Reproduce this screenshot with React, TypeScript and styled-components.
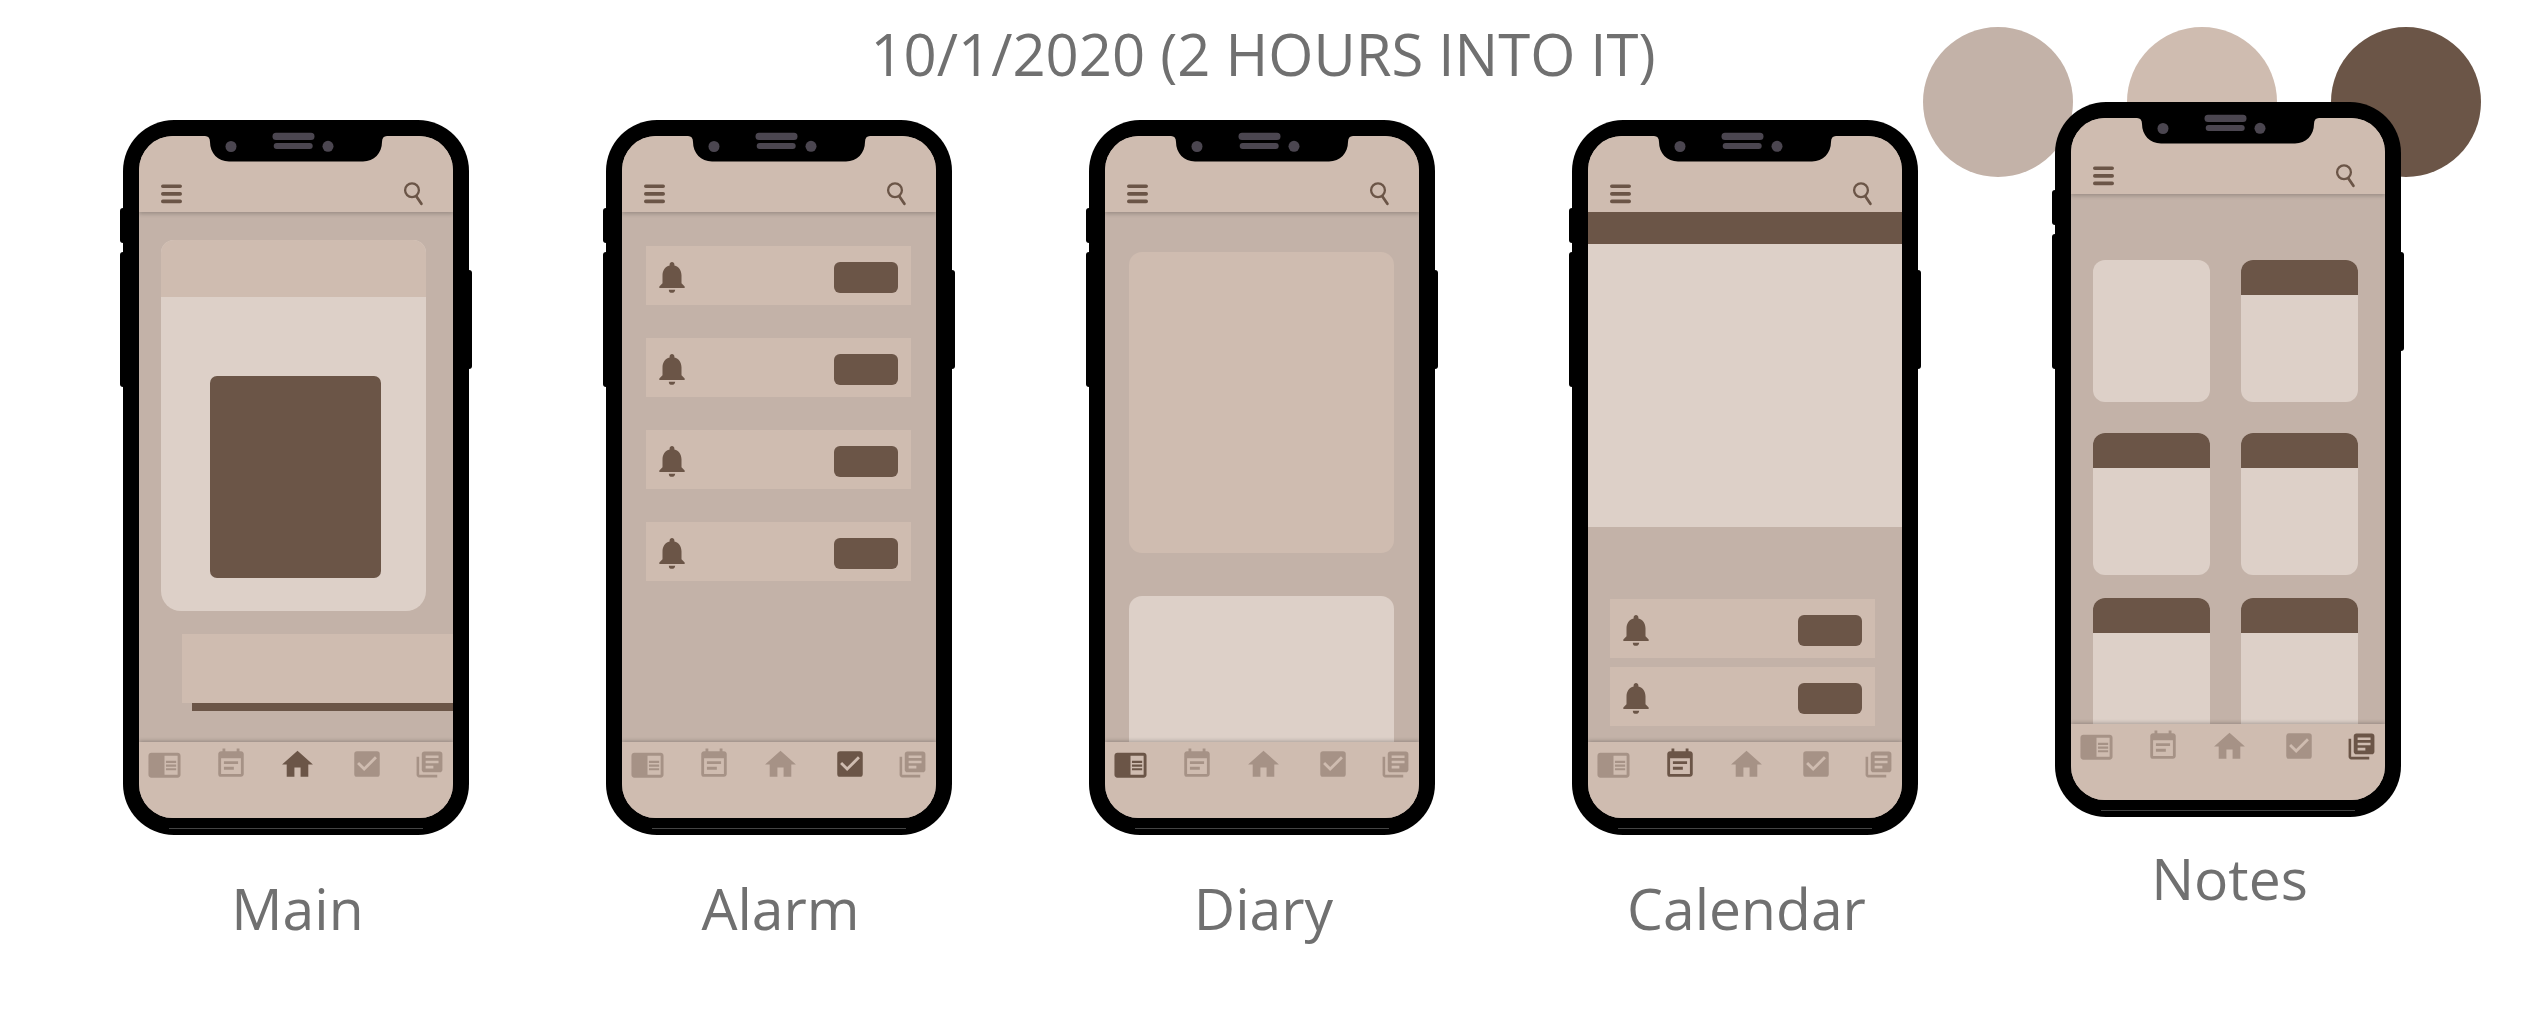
import React from "react";
import styled, { createGlobalStyle } from "styled-components";
import {
  MdCheckBox,
  MdChromeReaderMode,
  MdEventNote,
  MdHome,
  MdLibraryBooks,
  MdNotifications,
} from "react-icons/md";

const color = {
  taupe: "#c3b2a8",
  sand: "#cfbcb0",
  cream: "#ddd0c8",
  brown: "#6b5547",
  muted: "#a69286",
  text: "#707070",
};

const GlobalStyle = createGlobalStyle`
  *, *::before, *::after { box-sizing: border-box; }
  body {
    margin: 0;
    background: #fff;
    color: ${color.text};
    font-family: "Segoe UI", "Open Sans", "Noto Sans", sans-serif;
  }
  button { border: 0; padding: 0; background: none; color: inherit; cursor: pointer; }
`;

const Page = styled.main`
  position: relative;
  padding-bottom: 64px;
`;

const Title = styled.h1`
  position: relative;
  z-index: 1;
  margin: 0;
  height: 120px;
  padding-top: 14px;
  font-size: 58px;
  line-height: 80px;
  font-weight: 400;
  text-align: center;
  white-space: nowrap;
`;

const Palette = styled.div`
  position: absolute;
  top: 27px;
  right: 45px;
  display: flex;
  gap: 54px;
`;

const Swatch = styled.div<{ $fill: string }>`
  width: 150px;
  height: 150px;
  border-radius: 50%;
  background: ${(p) => p.$fill};
`;

const Board = styled.div`
  position: relative;
  display: flex;
  justify-content: space-between;
  align-items: flex-start;
  padding: 0 125px 0 123px;
`;

const Figure = styled.figure<{ $raised?: boolean }>`
  display: flex;
  flex-direction: column;
  align-items: center;
  gap: ${(p) => (p.$raised ? "21px" : "33px")};
  margin: ${(p) => (p.$raised ? "-18px 0 0" : "0")};
`;

const Caption = styled.figcaption`
  padding-left: 3px;
  font-size: 57px;
  line-height: 80px;
`;

const Device = styled.div`
  position: relative;
  width: 346px;
  height: 715px;
  padding: 16px 16px 17px;
  border-radius: 51px;
  background: #000;

  &::after {
    content: "";
    position: absolute;
    right: 46px;
    bottom: 6px;
    left: 46px;
    height: 1px;
    background: #444;
  }
`;

const SideKey = styled.span<{ $side: "left" | "right"; $top: number; $length: number }>`
  position: absolute;
  ${(p) => p.$side}: -3px;
  top: ${(p) => p.$top}px;
  width: 8px;
  height: ${(p) => p.$length}px;
  border-radius: 3px;
  background: #000;
`;

const Notch = styled.svg`
  position: absolute;
  top: 12px;
  left: 82px;
  width: 182px;
  height: 30px;
`;

const Screen = styled.div`
  display: flex;
  flex-direction: column;
  height: 100%;
  overflow: hidden;
  border-radius: 34px;
  background: ${color.taupe};
`;

const TopBar = styled.header`
  flex: none;
  display: flex;
  justify-content: space-between;
  align-items: flex-end;
  height: 76px;
  padding: 0 29px 6px 22px;
  background: ${color.sand};
  color: ${color.brown};
  box-shadow: 0 2px 4px rgba(0, 0, 0, 0.2);

  svg { display: block; }
`;

const Content = styled.div<{ $inset?: string }>`
  flex: 1;
  min-height: 0;
  overflow: hidden;
  display: flex;
  flex-direction: column;
  padding: ${(p) => p.$inset ?? "0"};
`;

const TabBar = styled.nav`
  flex: none;
  display: flex;
  justify-content: space-between;
  align-items: flex-start;
  height: 76px;
  padding: 3px 8px 0;
  background: ${color.sand};
  box-shadow: 0 -1px 4px rgba(0, 0, 0, 0.24);
`;

const Tab = styled.button<{ $active: boolean; $pad: string }>`
  display: flex;
  align-items: center;
  height: 38px;
  padding: ${(p) => p.$pad};
  color: ${(p) => (p.$active ? color.brown : color.muted)};
`;

const Hero = styled.section`
  flex: none;
  height: 371px;
  margin-right: 27px;
  overflow: hidden;
  border-radius: 13px 13px 20px 20px;
  background: ${color.cream};
`;

const HeroHeader = styled.div`
  height: 57px;
  background: ${color.sand};
`;

const HeroPicture = styled.div`
  width: 171px;
  height: 202px;
  margin: 79px 0 0 49px;
  border-radius: 7px;
  background: ${color.brown};
`;

const Strip = styled.section`
  flex: none;
  height: 69px;
  margin: 23px 0 0 21px;
  background: ${color.sand};
`;

const StripProgress = styled.div`
  flex: none;
  height: 8px;
  margin-left: 31px;
  background: ${color.brown};
`;

const AlarmList = styled.ul<{ $gap: number }>`
  display: flex;
  flex-direction: column;
  gap: ${(p) => p.$gap}px;
  margin: 0;
  padding: 0;
  list-style: none;
`;

const AlarmItem = styled.li`
  display: flex;
  justify-content: space-between;
  align-items: flex-start;
  height: 59px;
  padding: 16px 13px 0 7px;
  background: ${color.sand};
  color: ${color.brown};

  svg { margin-top: -4px; }
`;

const AlarmButton = styled.button`
  && {
    width: 64px;
    height: 31px;
    border-radius: 6px;
    background: ${color.brown};
  }
`;

const Entry = styled.section<{ $fill: string; $height: number }>`
  flex: none;
  height: ${(p) => p.$height}px;
  border-radius: 13px;
  background: ${(p) => p.$fill};

  & + & { margin-top: 43px; }
`;

const MonthHeader = styled.div`
  flex: none;
  height: 32px;
  background: ${color.brown};
`;

const MonthView = styled.div`
  flex: none;
  height: 283px;
  background: ${color.cream};
`;

const Reminders = styled.section`
  padding: 72px 27px 0 22px;
`;

const NoteRow = styled.div<{ $space: number }>`
  flex: none;
  display: grid;
  grid-template-columns: 1fr 1fr;
  gap: 31px;
  height: 142px;
  margin-top: ${(p) => p.$space}px;
`;

const Note = styled.article<{ $plain?: boolean }>`
  overflow: hidden;
  border-radius: 12px;
  background: ${color.cream};

  &::before {
    content: "";
    display: block;
    height: ${(p) => (p.$plain ? "0" : "35px")};
    background: ${color.brown};
  }
`;

const tabs = [
  { name: "Diary", Icon: MdChromeReaderMode, size: 35, pad: "0" },
  { name: "Calendar", Icon: MdEventNote, size: 34, pad: "0 0 0 2px" },
  { name: "Main", Icon: MdHome, size: 37, pad: "0 4px 0 0" },
  { name: "Alarm", Icon: MdCheckBox, size: 34, pad: "0" },
  { name: "Notes", Icon: MdLibraryBooks, size: 31, pad: "0" },
];

function Phone({ name, raised, children }: { name: string; raised?: boolean; children: React.ReactNode }) {
  return (
    <Figure $raised={raised}>
      <Device>
        <SideKey $side="left" $top={88} $length={35} />
        <SideKey $side="left" $top={132} $length={135} />
        <SideKey $side="right" $top={150} $length={99} />
        <Screen>
          <TopBar>
            <button aria-label="Menu">
              <svg width="21" height="25" viewBox="0 0 21 25" stroke="currentColor" strokeWidth="3.6" strokeLinecap="round">
                <path d="M1.8 5.3h17.4M1.8 12.9h17.4M1.8 20.4h17.4" />
              </svg>
            </button>
            <button aria-label="Search">
              <svg width="22" height="26" viewBox="0 0 22 26" fill="none" stroke="currentColor" strokeWidth="2.3" strokeLinecap="round">
                <circle cx="10" cy="10.2" r="6.9" />
                <path d="M14.600 16.800l4.800 7" strokeWidth="2.8" />
              </svg>
            </button>
          </TopBar>
          {children}
          <TabBar aria-label="Sections">
            {tabs.map(({ name: tab, Icon, size, pad }) => (
              <Tab key={tab} aria-label={tab} $active={tab === name} $pad={pad}>
                <Icon size={size} />
              </Tab>
            ))}
          </TabBar>
        </Screen>
        <Notch viewBox="0 0 182 30" aria-hidden="true">
          <path d="M0 0V4Q5 4 5 10C5 21 13 29.500 24 29.500H158C169 29.500 177 21 177 10Q177 4 182 4V0Z" fill="#000" />
          <g fill="#4b4650">
            <circle cx="26" cy="14.500" r="5.500" />
            <circle cx="123" cy="14.300" r="5.500" />
            <rect x="67.500" y="0.700" width="42" height="7.300" rx="3.500" />
            <rect x="68.700" y="11" width="39" height="6" rx="3" />
          </g>
        </Notch>
      </Device>
      <Caption>{name}</Caption>
    </Figure>
  );
}

function Alarms({ count, gap }: { count: number; gap: number }) {
  return (
    <AlarmList $gap={gap}>
      {Array.from({ length: count }, (_, i) => (
        <AlarmItem key={i}>
          <MdNotifications size={38} />
          <AlarmButton aria-label={`Alarm ${i + 1}`} />
        </AlarmItem>
      ))}
    </AlarmList>
  );
}

export default function App() {
  return (
    <Page>
      <GlobalStyle />
      <Palette>
        <Swatch $fill={color.taupe} />
        <Swatch $fill={color.sand} />
        <Swatch $fill={color.brown} />
      </Palette>
      <Title>10/1/2020 (2 HOURS INTO IT)</Title>
      <Board>
        <Phone name="Main">
          <Content $inset="28px 0 0 22px">
            <Hero>
              <HeroHeader />
              <HeroPicture />
            </Hero>
            <Strip />
            <StripProgress />
          </Content>
        </Phone>
        <Phone name="Alarm">
          <Content $inset="34px 25px 0 24px">
            <Alarms count={4} gap={33} />
          </Content>
        </Phone>
        <Phone name="Diary">
          <Content $inset="40px 25px 0 24px">
            <Entry $fill={color.sand} $height={301} />
            <Entry $fill={color.cream} $height={180} />
          </Content>
        </Phone>
        <Phone name="Calendar">
          <Content>
            <MonthHeader />
            <MonthView />
            <Reminders>
              <Alarms count={2} gap={9} />
            </Reminders>
          </Content>
        </Phone>
        <Phone name="Notes" raised>
          <Content $inset="0 27px 0 22px">
            <NoteRow $space={66}>
              <Note $plain />
              <Note />
            </NoteRow>
            <NoteRow $space={31}>
              <Note />
              <Note />
            </NoteRow>
            <NoteRow $space={23}>
              <Note />
              <Note />
            </NoteRow>
          </Content>
        </Phone>
      </Board>
    </Page>
  );
}
